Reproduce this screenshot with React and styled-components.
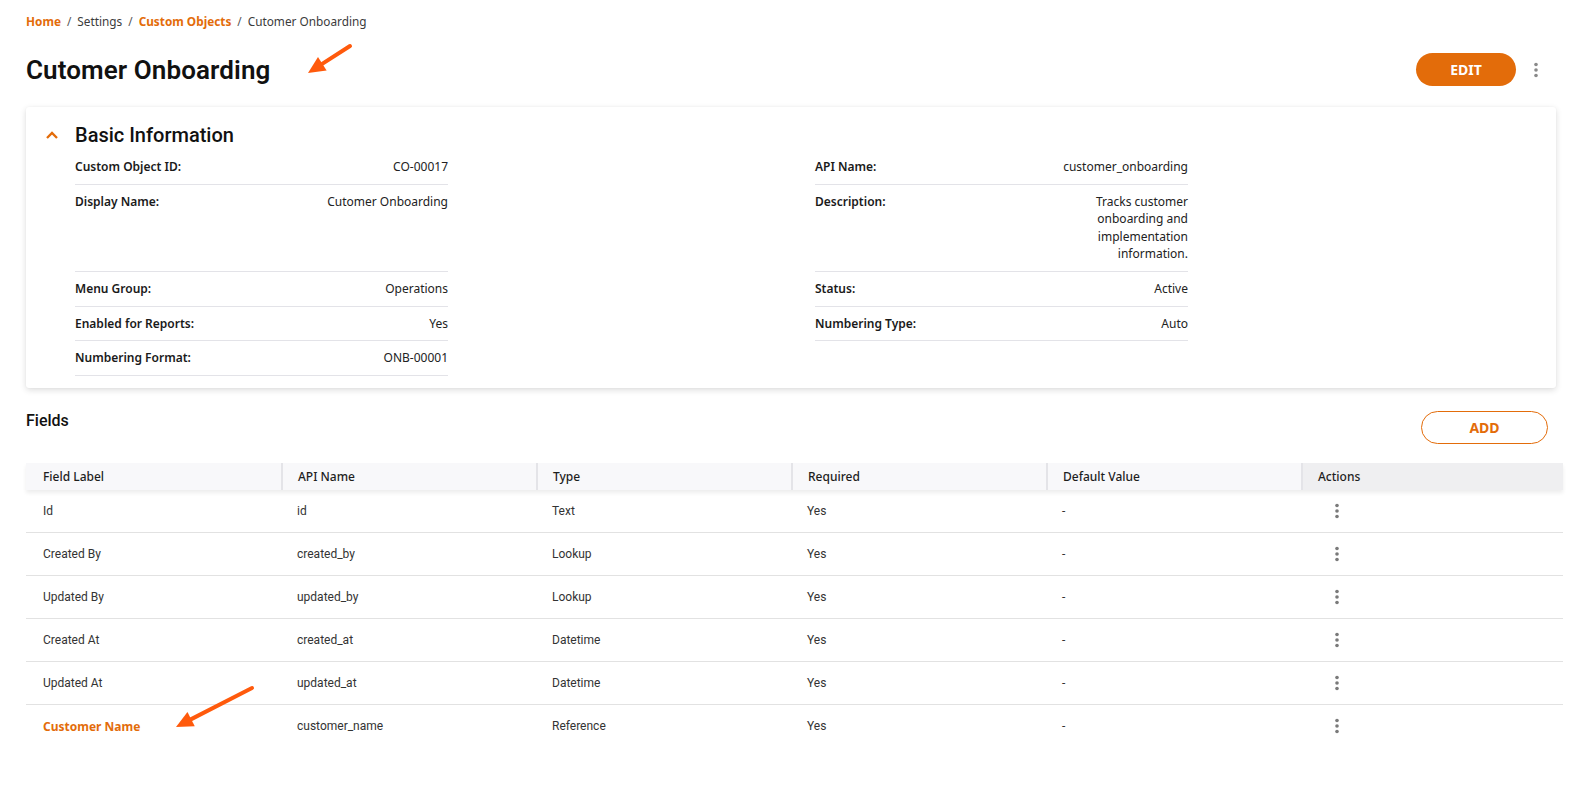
import styled, { createGlobalStyle } from "styled-components";

const ORANGE = "#e36c0a";

const GlobalStyle = createGlobalStyle`
  html, body {
    margin: 0;
    padding: 0;
    background: #fff;
    overflow: hidden;
  }
  body {
    font-family: "Noto Sans", "Open Sans", sans-serif;
    color: #1b1b1b;
  }
  * {
    box-sizing: border-box;
  }
`;

const basicLeft = [
  { label: "Custom Object ID:", value: "CO-00017" },
  { label: "Display Name:", value: "Cutomer Onboarding" },
  { label: "Menu Group:", value: "Operations" },
  { label: "Enabled for Reports:", value: "Yes" },
  { label: "Numbering Format:", value: "ONB-00001" },
];

const basicRight = [
  { label: "API Name:", value: "customer_onboarding" },
  {
    label: "Description:",
    value: "Tracks customer onboarding and implementation information.",
  },
  { label: "Status:", value: "Active" },
  { label: "Numbering Type:", value: "Auto" },
  null,
];

const fields = [
  { label: "Id", api: "id", type: "Text" },
  { label: "Created By", api: "created_by", type: "Lookup" },
  { label: "Updated By", api: "updated_by", type: "Lookup" },
  { label: "Created At", api: "created_at", type: "Datetime" },
  { label: "Updated At", api: "updated_at", type: "Datetime" },
  { label: "Customer Name", api: "customer_name", type: "Reference", highlight: true },
];

const columns = ["Field Label", "API Name", "Type", "Required", "Default Value", "Actions"];

const Kebab = ({ color = "#7a7a7a" }) => (
  <svg width="6" height="16" viewBox="0 0 6 16">
    <circle cx="3" cy="2.5" r="1.8" fill={color} />
    <circle cx="3" cy="8" r="1.8" fill={color} />
    <circle cx="3" cy="13.5" r="1.8" fill={color} />
  </svg>
);

const Arrow = ({ top, left, width, height, x1, y1, x2, y2 }) => {
  const dx = x2 - x1;
  const dy = y2 - y1;
  const len = Math.hypot(dx, dy);
  const ux = dx / len;
  const uy = dy / len;
  const head = 17;
  const half = 8;
  const bx = x2 - ux * head;
  const by = y2 - uy * head;
  const p1 = `${bx - uy * half},${by + ux * half}`;
  const p2 = `${bx + uy * half},${by - ux * half}`;
  return (
    <ArrowSvg style={{ top, left }} width={width} height={height} viewBox={`0 0 ${width} ${height}`}>
      <line x1={x1} y1={y1} x2={bx + ux * 2} y2={by + uy * 2} stroke="#ff5a0c" strokeWidth="4" strokeLinecap="round" />
      <polygon points={`${x2},${y2} ${p1} ${p2}`} fill="#ff5a0c" />
    </ArrowSvg>
  );
};

export default function App() {
  return (
    <Page>
      <GlobalStyle />
      <Breadcrumbs>
        <Crumb active>Home</Crumb>
        <Sep>/</Sep>
        <Crumb>Settings</Crumb>
        <Sep>/</Sep>
        <Crumb active>Custom Objects</Crumb>
        <Sep>/</Sep>
        <Crumb>Cutomer Onboarding</Crumb>
      </Breadcrumbs>

      <HeaderRow>
        <Title>Cutomer Onboarding</Title>
        <HeaderActions>
          <EditButton>EDIT</EditButton>
          <IconButton>
            <Kebab color="#8a8a8a" />
          </IconButton>
        </HeaderActions>
      </HeaderRow>

      <Card>
        <CardTitle>
          <Chevron width="14" height="10" viewBox="0 0 14 10">
            <path d="M2 8 L7 3 L12 8" fill="none" stroke={ORANGE} strokeWidth="2.3" />
          </Chevron>
          Basic Information
        </CardTitle>
        <InfoGrid>
          {basicLeft.map((l, i) => (
            <InfoPair key={i}>
              <InfoRow>
                <InfoLabel>{l.label}</InfoLabel>
                <InfoValue>{l.value}</InfoValue>
              </InfoRow>
              {basicRight[i] ? (
                <InfoRow>
                  <InfoLabel>{basicRight[i].label}</InfoLabel>
                  <InfoValue>{basicRight[i].value}</InfoValue>
                </InfoRow>
              ) : (
                <EmptyCell />
              )}
            </InfoPair>
          ))}
        </InfoGrid>
      </Card>

      <SectionRow>
        <SectionTitle>Fields</SectionTitle>
        <AddButton>ADD</AddButton>
      </SectionRow>

      <Table>
        <HeadRow>
          {columns.map((c, i) => (
            <HeadCell key={c} actions={i === columns.length - 1} first={i === 0}>
              {c}
            </HeadCell>
          ))}
        </HeadRow>
        {fields.map((f) => (
          <BodyRow key={f.api}>
            <BodyCell first highlight={f.highlight}>
              {f.label}
            </BodyCell>
            <BodyCell>{f.api}</BodyCell>
            <BodyCell>{f.type}</BodyCell>
            <BodyCell>Yes</BodyCell>
            <BodyCell>-</BodyCell>
            <ActionCell>
              <Kebab />
            </ActionCell>
          </BodyRow>
        ))}
      </Table>

      <Arrow top={40} left={300} width={60} height={40} x1={50} y1={6} x2={8} y2={33} />
      <Arrow top={682} left={168} width={92} height={50} x1={84} y1={6} x2={8} y2={45} />
    </Page>
  );
}

const Page = styled.div`
  position: relative;
  width: 100vw;
  height: 100vh;
  overflow: hidden;
  padding: 12px 21px 0 26px;
`;

const Breadcrumbs = styled.nav`
  display: flex;
  align-items: center;
  gap: 6px;
  font-size: 11.8px;
  line-height: 18px;
`;

const Crumb = styled.span`
  color: ${(p) => (p.active ? ORANGE : "#3b3b3b")};
  font-weight: ${(p) => (p.active ? 700 : 400)};
`;

const Sep = styled.span`
  color: #555;
`;

const HeaderRow = styled.div`
  display: flex;
  align-items: center;
  justify-content: space-between;
  margin-top: 23px;
  height: 33px;
`;

const Title = styled.h1`
  margin: 0;
  font-family: Roboto, sans-serif;
  font-size: 26px;
  font-weight: 600;
  color: #111;
  letter-spacing: 0.1px;
`;

const HeaderActions = styled.div`
  display: flex;
  align-items: center;
`;

const EditButton = styled.button`
  width: 100px;
  height: 33px;
  border: none;
  border-radius: 17px;
  background: ${ORANGE};
  color: #fff;
  font-family: "Noto Sans", sans-serif;
  font-size: 14px;
  font-weight: 700;
  cursor: pointer;
`;

const IconButton = styled.button`
  width: 40px;
  height: 33px;
  border: none;
  background: none;
  padding: 0;
  display: flex;
  align-items: center;
  justify-content: center;
  cursor: pointer;
`;

const Card = styled.section`
  margin-top: 21px;
  background: #fff;
  border-radius: 3px;
  box-shadow: 0 2px 6px rgba(0, 0, 0, 0.14), 0 0 2px rgba(0, 0, 0, 0.04);
  padding: 14px 49px 12px 19px;
`;

const CardTitle = styled.h2`
  margin: 0;
  display: flex;
  align-items: center;
  gap: 16px;
  font-family: Roboto, sans-serif;
  font-size: 20px;
  font-weight: 500;
  line-height: 29px;
  color: #111;
`;

const Chevron = styled.svg`
  display: block;
  width: 14px;
  margin-top: -2px;
`;

const InfoGrid = styled.div`
  display: flex;
  flex-direction: column;
  padding-left: 30px;
`;

const InfoPair = styled.div`
  display: grid;
  grid-template-columns: 373px 373px;
  column-gap: 367px;
`;

const InfoRow = styled.div`
  display: flex;
  justify-content: space-between;
  align-items: flex-start;
  gap: 16px;
  padding: 8px 0 8px;
  border-bottom: 1px solid #e3e3e8;
  font-size: 12px;
  line-height: 17.6px;
`;

const EmptyCell = styled.div``;

const InfoLabel = styled.span`
  font-weight: 600;
  color: #1a1a1a;
`;

const InfoValue = styled.span`
  max-width: 140px;
  text-align: right;
  color: #222;
`;

const SectionRow = styled.div`
  display: flex;
  justify-content: space-between;
  align-items: flex-start;
  margin-top: 23px;
  margin-right: 8px;
  height: 33px;
`;

const SectionTitle = styled.h3`
  margin: 0;
  font-family: Roboto, sans-serif;
  font-size: 16px;
  font-weight: 500;
  line-height: 20px;
  color: #111;
`;

const AddButton = styled.button`
  width: 127px;
  height: 33px;
  border: 1px solid ${ORANGE};
  border-radius: 17px;
  background: #fff;
  color: ${ORANGE};
  font-family: "Noto Sans", sans-serif;
  font-size: 14px;
  font-weight: 700;
  cursor: pointer;
`;

const Table = styled.div`
  margin-top: 19px;
  margin-right: -7px;
  display: flex;
  flex-direction: column;
`;

const rowGrid = `
  display: grid;
  grid-template-columns: 255px 255px 255px 255px 255px 1fr;
`;

const HeadRow = styled.div`
  ${rowGrid}
  height: 27px;
  background: #f8f8fa;
  box-shadow: 0 3px 4px rgba(0, 0, 0, 0.07);
  position: relative;
  z-index: 1;
`;

const HeadCell = styled.div`
  display: flex;
  align-items: center;
  padding-left: ${(p) => (p.first ? "17px" : "15px")};
  border-left: ${(p) => (p.first ? "none" : "2px solid #e4e4e8")};
  background: ${(p) => (p.actions ? "#efeff1" : "transparent")};
  font-size: 12px;
  font-weight: 500;
  color: #1e1e1e;
`;

const BodyRow = styled.div`
  ${rowGrid}
  height: 43px;
  border-bottom: 1px solid #e2e2e2;
  &:last-child {
    border-bottom: none;
  }
`;

const BodyCell = styled.div`
  display: flex;
  align-items: center;
  padding-left: ${(p) => (p.first ? "17px" : "16px")};
  font-family: ${(p) => (p.highlight ? '"Noto Sans", sans-serif' : "Roboto, sans-serif")};
  font-size: 12px;
  font-weight: ${(p) => (p.highlight ? 700 : 400)};
  color: ${(p) => (p.highlight ? ORANGE : "#333")};
`;

const ActionCell = styled.div`
  display: flex;
  align-items: center;
  padding-left: 33px;
`;

const ArrowSvg = styled.svg`
  position: absolute;
  pointer-events: none;
`;
